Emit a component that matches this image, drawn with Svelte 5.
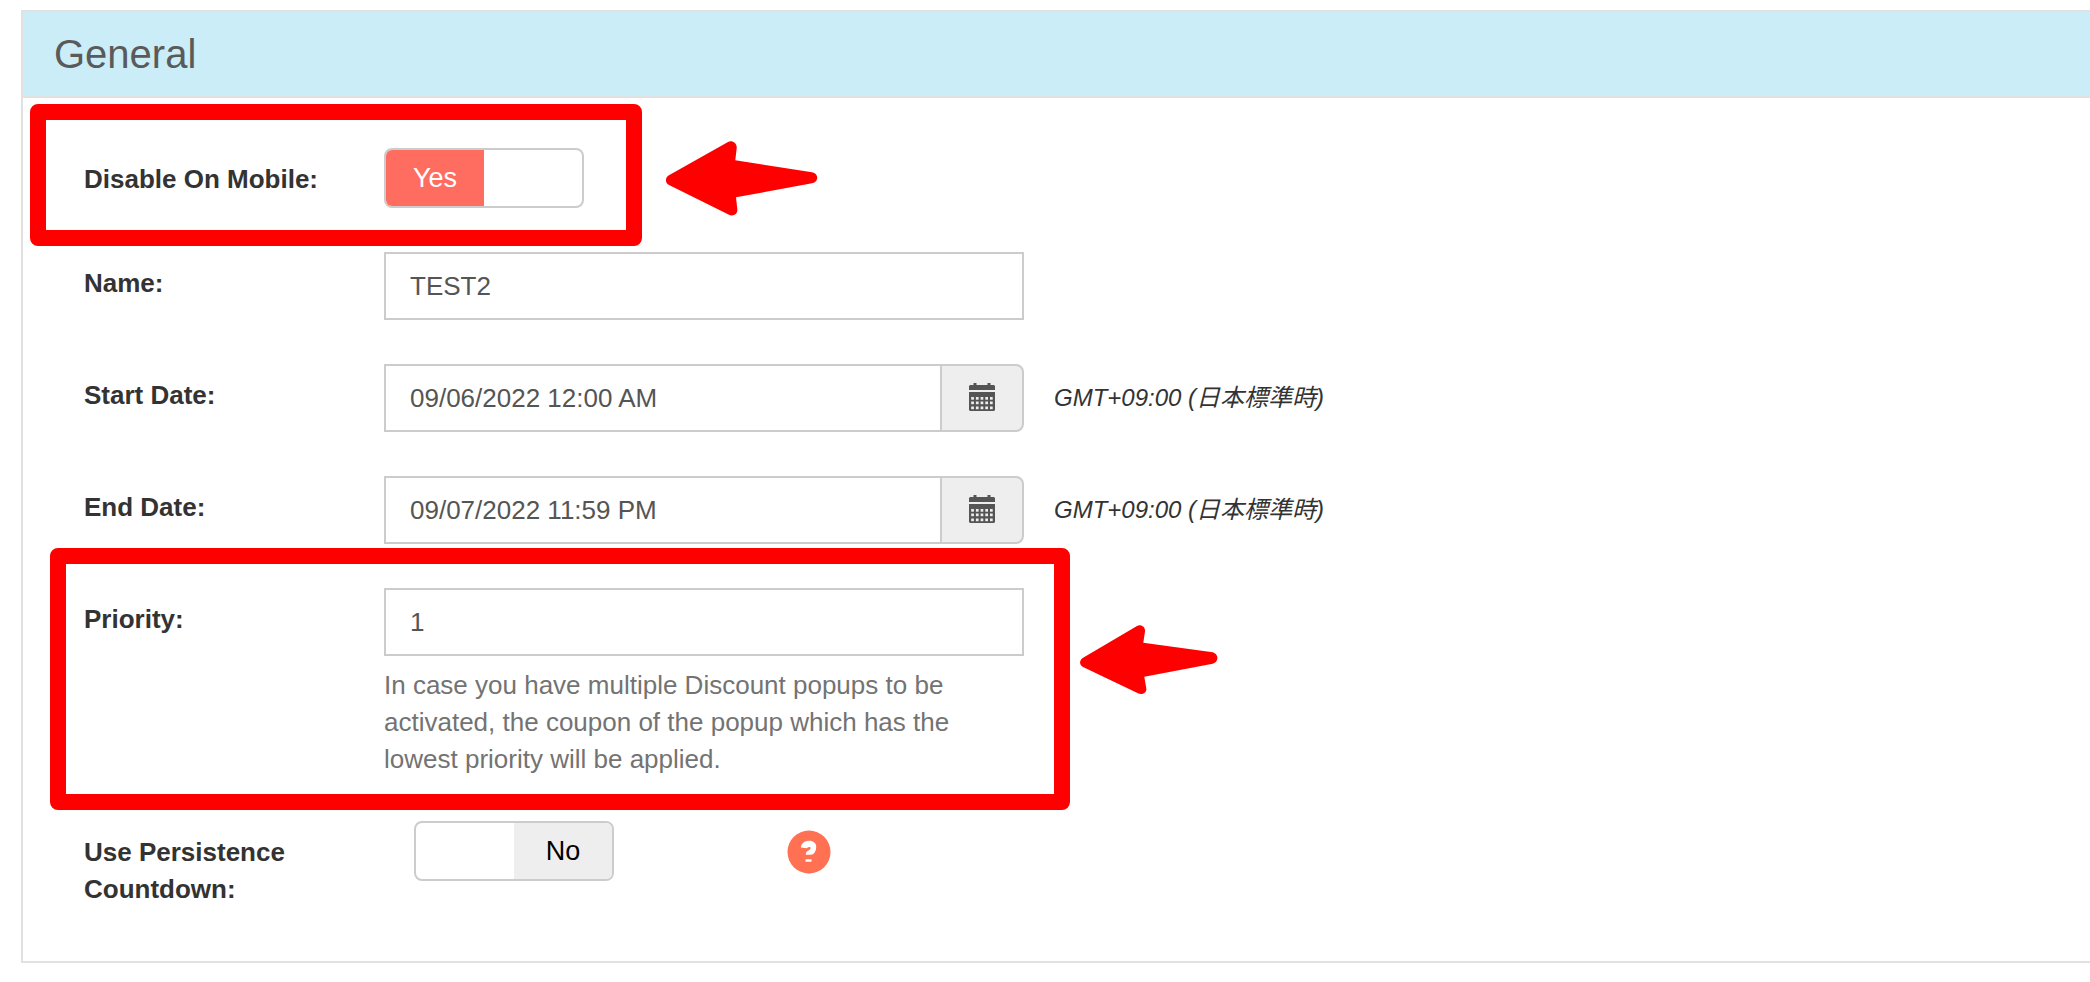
<script>
  let disableOnMobile = $state(true);
  let persistence = $state(false);
  let name = $state('TEST2');
  let startDate = $state('09/06/2022 12:00 AM');
  let endDate = $state('09/07/2022 11:59 PM');
  let priority = $state('1');
  const timezone = 'GMT+09:00 (日本標準時)';
  const holes = [0, 1, 2, 3, 4];
</script>

{#snippet calendar()}
  <svg class="calendar" viewBox="0 0 26 28" aria-hidden="true">
    <path d="M1 2H4.500V0H7.500V2H18.500V0H21.500V2H25L26 3V7H0V3Z" fill="#555" />
    <path d="M0 9H26V27L25 28H1L0 27Z" fill="#555" />
    {#each [14, 18.5, 23.5] as y}
      {#each holes as col}
        <rect x={2.2 + col * 4.7} {y} width="2.7" height="2.7" fill="#eee" />
      {/each}
    {/each}
  </svg>
{/snippet}

{#snippet toggle(id, on, flip)}
  <button {id} class="toggle" type="button" role="switch" aria-checked={on} onclick={flip}>
    <span class:yes={on}>{on ? 'Yes' : ''}</span>
    <span class:no={!on}>{on ? '' : 'No'}</span>
  </button>
{/snippet}

<section class="panel">
  <h2>General</h2>
  <form class="rows">
    <div class="row">
      <label for="mobile">Disable On Mobile:</label>
      {@render toggle('mobile', disableOnMobile, () => (disableOnMobile = !disableOnMobile))}
      <div class="mark mark-mobile"></div>
      <svg class="arrow arrow-mobile" viewBox="0 0 152 75" aria-hidden="true">
        <path d="M2.5 34.5L62 1C66 -1 71 2 70.7 7L69.3 19.3L146 31.3C153 32.5 153 41 146 42.3L70 56.3L71.3 68C72 73 67 76 62.5 73.5L3 44C-1 42 -1 37 2.5 34.5Z" />
      </svg>
    </div>

    <div class="row">
      <label for="name">Name:</label>
      <div class="field"><input id="name" type="text" bind:value={name} /></div>
    </div>

    <div class="row">
      <label for="start">Start Date:</label>
      <div class="field group">
        <input id="start" type="text" bind:value={startDate} />
        <button type="button" class="addon" aria-label="Pick start date">{@render calendar()}</button>
      </div>
      <em>{timezone}</em>
    </div>

    <div class="row">
      <label for="end">End Date:</label>
      <div class="field group">
        <input id="end" type="text" bind:value={endDate} />
        <button type="button" class="addon" aria-label="Pick end date">{@render calendar()}</button>
      </div>
      <em>{timezone}</em>
    </div>

    <div class="row">
      <label for="priority">Priority:</label>
      <div class="field">
        <input id="priority" type="text" bind:value={priority} aria-describedby="priority-help" />
        <p id="priority-help">In case you have multiple Discount popups to be activated, the coupon of the popup which has the lowest priority will be applied.</p>
      </div>
      <div class="mark mark-priority"></div>
      <svg class="arrow arrow-priority" viewBox="0 0 138 69" aria-hidden="true">
        <path d="M3.5 32.5L57 1C61 -1 65.5 2 65 6.5L63.3 17.7L132.7 27.3C139 29 139 37 132.7 38.7L64.3 51.7L66.3 63.3C67 67.5 62.5 70 58.5 68.5L3 42C-1 40 -1 35 3.5 32.5Z" />
      </svg>
    </div>

    <div class="row inset">
      <label for="persistence">Use Persistence Countdown:</label>
      {@render toggle('persistence', persistence, () => (persistence = !persistence))}
      <button type="button" class="help" aria-label="Help">
        <svg viewBox="0 0 44 44" aria-hidden="true">
          <circle cx="22" cy="22" r="21.5" fill="#ff7152" />
          <path d="M13.800 17.500C14.500 13 17.500 10.700 22 10.700C26.500 10.700 29.200 13 29.200 16.800C29.200 21.500 27 24.800 23.500 24.800H18.800C18.800 22 20 21.200 22 20.300C24.200 19.200 24 17 22.300 17C20.800 17 20.500 18.200 19.800 18.200Z" fill="#fff" />
          <rect x="18.500" y="29.300" width="6" height="2.400" fill="#fff" />
        </svg>
      </button>
    </div>
  </form>
</section>

<style>
  :global(body) {
    background: #fff;
    overflow-x: hidden;
  }
  .panel {
    margin: 10px 0 0 21px;
    border: 2px solid #e1e1e1;
    border-right: 0;
    font-family: "Liberation Sans", "Noto Sans CJK JP", sans-serif;
    font-size: 26px;
    line-height: 37px;
    color: #333;
  }
  h2 {
    margin: 0;
    padding: 20px 31px;
    background: #cbedf7;
    border-bottom: 2px solid #e1e1e1;
    font-size: 40px;
    font-weight: 400;
    line-height: 44px;
    color: #5a5a5a;
  }
  .rows {
    display: flex;
    flex-direction: column;
    gap: 44px;
    padding: 50px 60px 53px 61px;
  }
  .row {
    position: relative;
    display: flex;
    align-items: flex-start;
  }
  label {
    flex: none;
    box-sizing: border-box;
    width: 300px;
    padding: 13px 60px 0 0;
    font-weight: 700;
    white-space: nowrap;
  }
  .inset label {
    margin-right: 30px;
    white-space: normal;
  }
  .field {
    flex: 0 1 640px;
    min-width: 0;
  }
  input {
    display: block;
    box-sizing: border-box;
    width: 100%;
    height: 68px;
    margin: 0;
    padding: 0 24px;
    border: 2px solid #ccc;
    border-radius: 0;
    background: #fff;
    font: inherit;
    color: #555;
    outline: none;
  }
  .group {
    display: flex;
  }
  .group input {
    flex: 1;
    min-width: 0;
    border-right: 0;
  }
  button {
    font: inherit;
    cursor: pointer;
  }
  .addon {
    display: grid;
    place-items: center;
    width: 84px;
    padding: 0 0 2px;
    border: 2px solid #ccc;
    border-radius: 0 8px 8px 0;
    background: #eee;
  }
  .calendar {
    width: 26px;
    height: 28px;
  }
  em {
    margin-left: 30px;
    font-size: 24px;
    line-height: 68px;
    white-space: nowrap;
  }
  p {
    margin: 11px 0 0;
    color: #737373;
  }
  .field p {
    margin-bottom: -1px;
  }
  .toggle {
    display: flex;
    flex: none;
    width: 200px;
    height: 60px;
    padding: 0;
    border: 2px solid #ccc;
    border-radius: 8px;
    overflow: hidden;
    background: #fff;
    font-size: 27px;
    line-height: 56px;
    color: #000;
  }
  .toggle span {
    flex: 1;
    height: 56px;
  }
  .toggle .yes {
    background: #ff6c60;
    color: #fff;
  }
  .toggle .no {
    background: #eee;
  }
  .help {
    width: 44px;
    height: 44px;
    margin: 9px 0 0 173px;
    padding: 0;
    border: 0;
    background: none;
  }
  .help svg {
    display: block;
  }
  .mark {
    position: absolute;
    box-sizing: border-box;
    border: 16px solid #f00;
    border-radius: 8px;
    pointer-events: none;
  }
  .mark-mobile {
    left: -54px;
    top: -44px;
    width: 612px;
    height: 142px;
  }
  .mark-priority {
    left: -34px;
    top: -40px;
    width: 1020px;
    height: 262px;
  }
  .arrow {
    position: absolute;
    fill: #f00;
  }
  .arrow-mobile {
    left: 582px;
    top: -7px;
    width: 152px;
  }
  .arrow-priority {
    left: 996px;
    top: 37px;
    width: 138px;
  }
</style>
